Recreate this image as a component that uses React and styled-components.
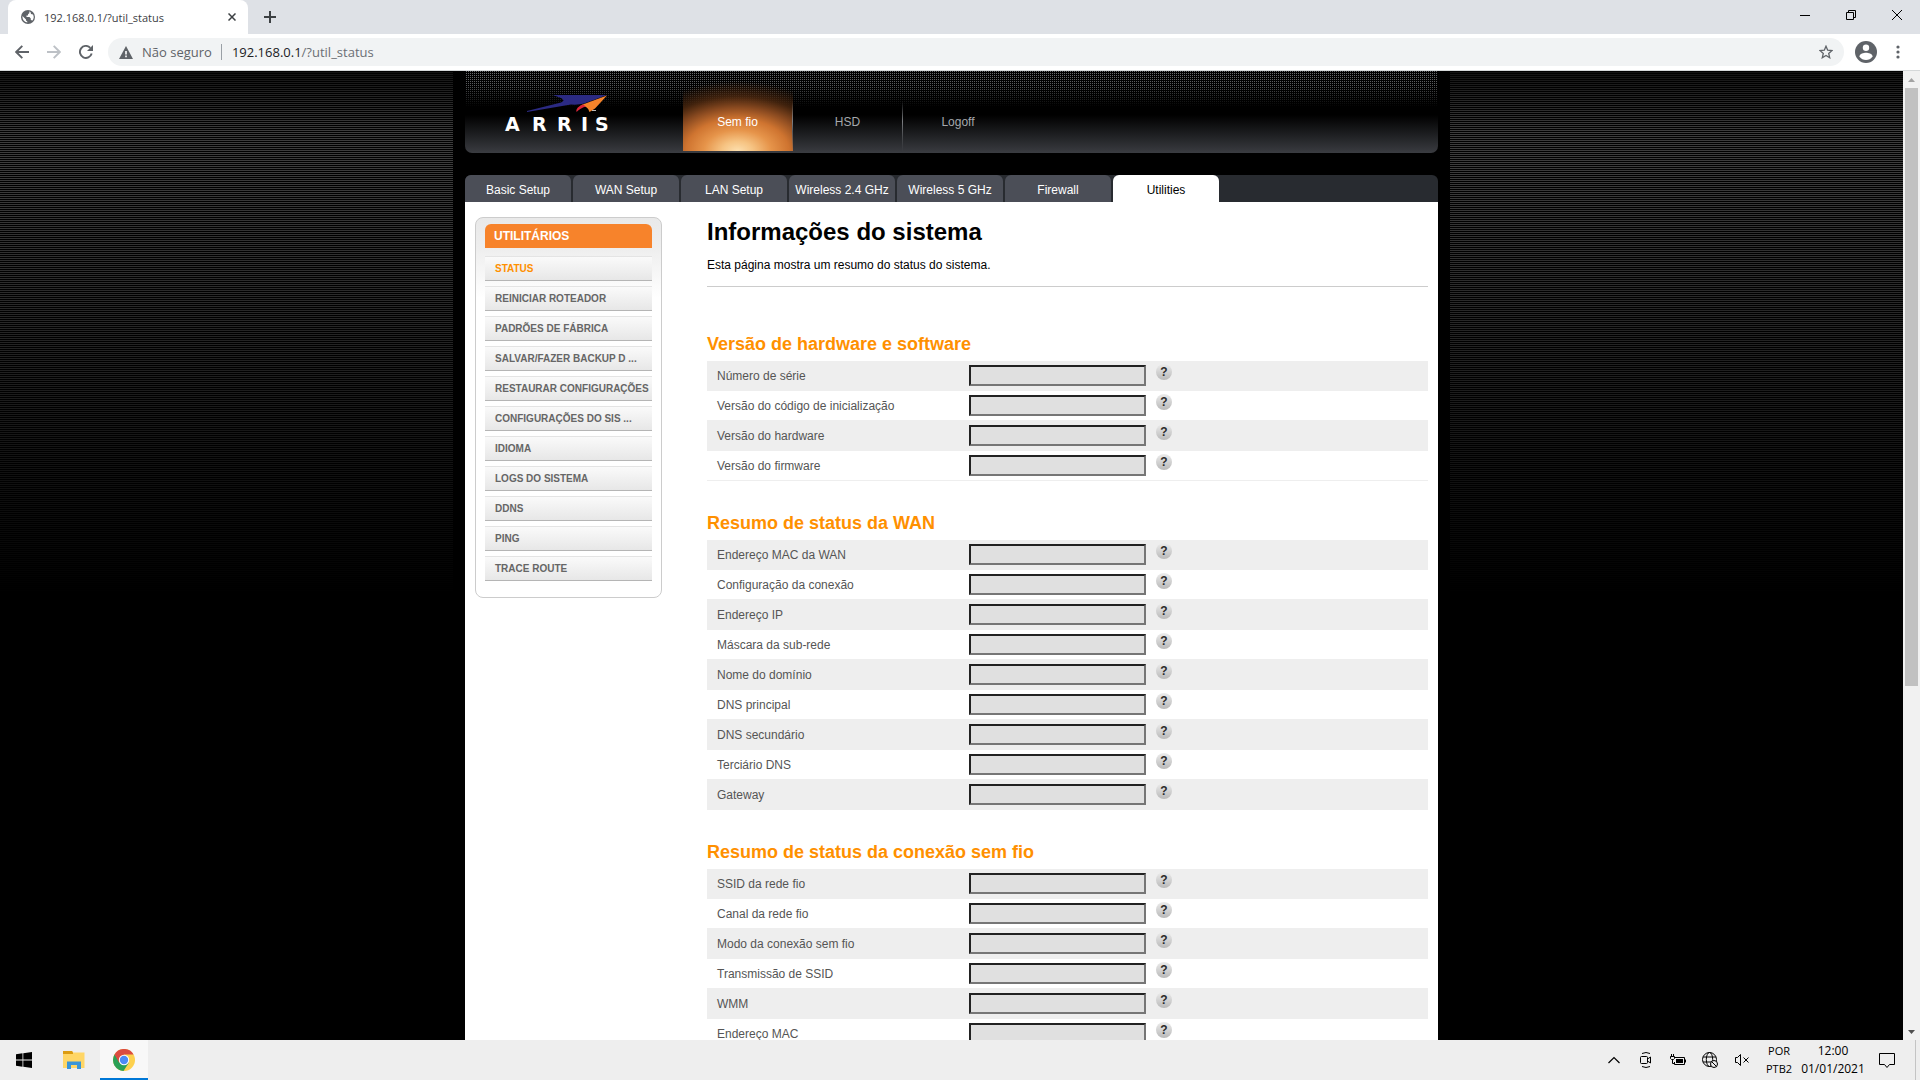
import React, { useState } from 'react'
import styled, { createGlobalStyle } from 'styled-components'

const GlobalStyle = createGlobalStyle`
  * {
    box-sizing: border-box;
  }
  body {
    margin: 0;
    font-family: "Liberation Sans", Arial, sans-serif;
    font-size: 12px;
  }
  button {
    border: 0;
    padding: 0;
    background: none;
    color: inherit;
    font-family: inherit;
    cursor: pointer;
  }
  a {
    text-decoration: none;
  }
  svg {
    display: block;
  }
`

const Screen = styled.div`
  display: flex;
  flex-direction: column;
  height: 100vh;
  overflow: hidden;
`

/* browser window */

const TabStrip = styled.div`
  display: flex;
  flex: none;
  height: 34px;
  padding-left: 8px;
  background: #dee1e6;
  font-family: "Open Sans", "Noto Sans", sans-serif;
  color: #3c4043;
`

const BrowserTab = styled.div`
  display: flex;
  align-items: center;
  width: 240px;
  height: 34px;
  padding: 0 8px 0 13px;
  border-radius: 8px 8px 0 0;
  background: #fff;
  font-size: 11px;
`

const TabTitle = styled.span`
  flex: 1;
  margin-left: 9px;
`

const IconButton = styled.button`
  display: flex;
  flex: none;
  align-items: center;
  justify-content: center;
  width: ${(props) => props.$w || 16}px;
  height: ${(props) => props.$h || 16}px;
  color: ${(props) => props.$color || '#5f6368'};
`

const WindowButtons = styled.div`
  display: flex;
  margin-left: auto;
`

const NewTab = styled(IconButton)`
  margin-left: 8px;
`

const Toolbar = styled.div`
  display: flex;
  flex: none;
  align-items: center;
  height: 37px;
  padding: 0 6px;
  border-bottom: 1px solid #d5d8d9;
  background: #fff;
  font-family: "Open Sans", "Noto Sans", sans-serif;
`

const Omnibox = styled.div`
  display: flex;
  flex: 1;
  align-items: center;
  height: 28px;
  margin: 0 6px;
  padding: 0 10px 0 11px;
  border-radius: 14px;
  background: #f1f3f4;
  font-size: 13px;
  color: #5f6368;
`

const Security = styled.span`
  margin-left: 9px;
  padding-right: 9px;
  border-right: 1px solid #9aa0a6;
  line-height: 16px;
`

const Address = styled.span`
  flex: 1;
  margin-left: 10px;
  color: #6b6f74;
`

const Host = styled.span`
  color: #202124;
`

const Viewport = styled.div`
  display: flex;
  flex: 1;
  min-height: 0;
  background: #000;
`

const Scrollbar = styled.div`
  display: flex;
  flex: none;
  flex-direction: column;
  align-items: center;
  width: 17px;
  background: #f1f1f1;
`

const Track = styled.div`
  flex: 1;
  width: 13px;
`

const Thumb = styled.div`
  height: 64%;
  background: #c1c1c1;
`

/* router page */

const Page = styled.div`
  position: relative;
  flex: 1;
  min-width: 0;
  overflow: hidden;
  background: #000;

  &::before {
    content: "";
    position: absolute;
    inset: 0 0 auto 0;
    height: 524px;
    background: repeating-linear-gradient(to bottom, #000 0 1px, #3c3c3c 1px 2px);
    mask-image: linear-gradient(to bottom, rgba(0, 0, 0, 0.3), #000 60px, #000 100px, transparent);
  }
`

const MainWrapper = styled.div`
  position: relative;
  max-width: 997px;
  min-height: 100%;
  margin: 0 auto;
  padding: 0 12px;
  background: #000;
`

const Header = styled.header`
  position: relative;
  display: flex;
  height: 82px;
  border-radius: 0 0 7px 7px;
  background: linear-gradient(to bottom, #000 44px, #3a3c41 82px);
  overflow: hidden;

  &::before {
    content: "";
    position: absolute;
    inset: 0 0 auto 0;
    height: 36px;
    background: conic-gradient(#6a6c70 25%, #000 0) 0 0 / 2px 2px;
    mask-image: linear-gradient(to bottom, #000, rgba(0, 0, 0, 0.8) 14px, transparent);
  }
`

const Logo = styled.a`
  position: relative;
  width: 218px;
  padding: 14px 0 0 35px;
`

const MainNav = styled.nav`
  position: relative;
  display: flex;
  height: 80px;
`

const MainNavItem = styled.a`
  width: 110px;
  padding-top: 43px;
  border-right: 1px solid;
  border-image: linear-gradient(to bottom, transparent 30px, #7b7d81 50px, #55575b 60px, transparent) 1;
  text-align: center;
  line-height: 16px;
  color: #a5a8ac;

  &:last-child {
    border: 0;
  }

  ${(props) => props.$active && `
    color: #fff;
    background: radial-gradient(ellipse 112px 70px at 50% 100%, #fddfae 0, #f6c382 14%, #e6944a 30%, #cf7430 46%, #8a4a20 62%, rgba(80, 42, 16, 0.8) 78%, rgba(50, 26, 10, 0) 100%);
  `}
`

const SubNav = styled.nav`
  display: flex;
  gap: 2px;
  height: 27px;
  margin-top: 22px;
  border-radius: 6px 6px 0 0;
  background: #282b30;
`

const SubNavItem = styled.a`
  width: 106px;
  border-radius: 6px 6px 0 0;
  background: ${(props) => (props.$active ? '#fff' : '#4b4e57')};
  color: ${(props) => (props.$active ? '#000' : '#fff')};
  line-height: 30px;
  height: 27px;
  text-align: center;
  white-space: nowrap;
`

const Content = styled.div`
  display: flex;
  align-items: flex-start;
  gap: 45px;
  padding: 0 10px 30px;
  background: #fff;
`

const Sidebar = styled.aside`
  flex: none;
  width: 187px;
  margin-top: 15px;
  padding: 6px 9px 16px;
  border: 1px solid #ccc;
  border-radius: 8px;
  background: linear-gradient(to bottom, #e9e9e9, #eee 30px, #fff 80px);
`

const SidebarTitle = styled.h3`
  margin: 0 0 8px;
  padding-left: 9px;
  border-radius: 6px 6px 0 0;
  background: #f7832b;
  color: #fff;
  font-size: 12px;
  line-height: 24px;
`

const Menu = styled.ul`
  display: flex;
  flex-direction: column;
  gap: 5px;
  margin: 0;
  padding: 0;
  list-style: none;
`

const MenuLink = styled.a`
  display: block;
  height: 25px;
  padding-left: 10px;
  border-top: 1px solid #e4e4e4;
  border-bottom: 1px solid #b5b5b5;
  background: linear-gradient(to bottom, #fafafa, #e7e7e7);
  color: ${(props) => (props.$active ? '#ff9000' : '#666')};
  font-size: 10px;
  font-weight: bold;
  line-height: 23px;
  white-space: nowrap;
`

const Main = styled.main`
  flex: 1;
  min-width: 0;
  padding-top: 14px;
`

const Heading = styled.h1`
  margin: 0 0 9px;
  font-size: 24px;
  line-height: 32px;
`

const Intro = styled.p`
  margin: 0;
  padding-bottom: 13px;
  border-bottom: 1px solid #ccc;
  line-height: 16px;
`

const Sections = styled.div`
  display: flex;
  flex-direction: column;
  gap: 30px;
  margin-top: 45px;
`

const Title = styled.h2`
  margin: 0 0 5px;
  color: #ff9000;
  font-size: 18px;
  line-height: 24px;
`

const Row = styled.div`
  display: flex;
  align-items: flex-start;
  height: 30px;
  border-bottom: 1px solid #eee;

  &:nth-child(even) {
    background: #eee;
  }
`

const Label = styled.label`
  width: 262px;
  padding-left: 10px;
  color: #555;
  line-height: 30px;
`

const Field = styled.input`
  width: 177px;
  height: 21px;
  margin: 4px 10px 0 0;
  padding: 0 2px;
  border: 2px solid;
  border-color: #222 #767676 #767676 #222;
  background: #e0e0e0;
`

const Help = styled.button`
  width: 16px;
  height: 16px;
  margin-top: 3px;
  border-radius: 50%;
  background: linear-gradient(to bottom, #ececec, #b9b9b9);
  color: #2b2b2b;
  font-size: 12px;
  font-weight: bold;
  line-height: 16px;
`

/* taskbar */

const Taskbar = styled.footer`
  display: flex;
  flex: none;
  align-items: center;
  height: 40px;
  background: #eee;
  color: #000;
  font-family: "Open Sans", "Noto Sans", sans-serif;
`

const Apps = styled.div`
  display: flex;
  gap: 2px;
`

const AppButton = styled(IconButton)`
  width: 48px;
  height: 40px;
  ${(props) => props.$active && `
    background: #f8f8f8;
    border-bottom: 2px solid #0078d7;
    border-top: 2px solid transparent;
  `}
`

const Tray = styled.div`
  display: flex;
  align-items: center;
  gap: 16px;
  margin-left: auto;
`

const Language = styled.button`
  width: 26px;
  margin-right: 8px;
  font-size: 11px;
  line-height: 18px;
`

const Clock = styled.button`
  width: 66px;
  margin-right: 3px;
  font-size: 12px;
  line-height: 18px;
`

const Notifications = styled(IconButton)`
  width: 36px;
`

const ShowDesktop = styled.button`
  width: 5px;
  height: 40px;
  margin-left: 10px;
  border-left: 1px solid #c4c4c4;
`

const TrayText = styled.div`
  display: flex;
`

const mainNav = ['Sem fio', 'HSD', 'Logoff']

const subNav = ['Basic Setup', 'WAN Setup', 'LAN Setup', 'Wireless 2.4 GHz', 'Wireless 5 GHz', 'Firewall', 'Utilities']

const menu = [
  'STATUS',
  'REINICIAR ROTEADOR',
  'PADRÕES DE FÁBRICA',
  'SALVAR/FAZER BACKUP D ...',
  'RESTAURAR CONFIGURAÇÕES',
  'CONFIGURAÇÕES DO SIS ...',
  'IDIOMA',
  'LOGS DO SISTEMA',
  'DDNS',
  'PING',
  'TRACE ROUTE',
]

const sections = [
  {
    title: 'Versão de hardware e software',
    fields: ['Número de série', 'Versão do código de inicialização', 'Versão do hardware', 'Versão do firmware'],
  },
  {
    title: 'Resumo de status da WAN',
    fields: [
      'Endereço MAC da WAN',
      'Configuração da conexão',
      'Endereço IP',
      'Máscara da sub-rede',
      'Nome do domínio',
      'DNS principal',
      'DNS secundário',
      'Terciário DNS',
      'Gateway',
    ],
  },
  {
    title: 'Resumo de status da conexão sem fio',
    fields: ['SSID da rede fio', 'Canal da rede fio', 'Modo da conexão sem fio', 'Transmissão de SSID', 'WMM', 'Endereço MAC'],
  },
]

const ArrisLogo = () => (
  <svg width="116" height="56" viewBox="0 0 116 56">
    <path d="M53 10H107L84 18.500Q79 20 71 19.500L27 27V26L61 17.500Q66 15.500 61 13Z" fill="#2b2a83" />
    <path d="M107 10.500L80 20.500Q88 20.500 89.500 27L95 23.500Z" fill="#f5832a" />
    <path d="M83 19.500Q75.500 22 76.500 27Q81 22.500 86 21.500Z" fill="#dc2438" />
    <path d="M92 25.500H96" stroke="#bbb" strokeWidth="1" />
    <text x="5 32 57 81 95" y="46" fill="#fff" fontFamily="DejaVu Sans, sans-serif" fontWeight="bold" fontSize="19">ARRIS</text>
  </svg>
)

const GlobeIcon = () => (
  <svg width="14" height="14" viewBox="0 0 14 14">
    <circle cx="7" cy="7" r="7" fill="#5f6368" />
    <path d="M8 1.400L8.500 3L7 4.200V5.500H5.500V7H8.500L9.800 8.500V10L11.500 10.500A5.600 5.600 0 0 0 12 4.500L10 4L9.500 2ZM1.500 6L5 9.500V10.500L6.300 11.500V12.600A5.600 5.600 0 0 1 1.500 6Z" fill="#fff" />
  </svg>
)

const BrowserBar = () => (
  <>
    <TabStrip>
      <BrowserTab>
        <GlobeIcon />
        <TabTitle>192.168.0.1/?util_status</TabTitle>
        <IconButton aria-label="Fechar guia" $color="#3c4043">
          <svg width="8" height="8" viewBox="0 0 8 8"><path d="M0.500 0.500L7.500 7.500M7.500 0.500L0.500 7.500" stroke="currentColor" strokeWidth="1.500" /></svg>
        </IconButton>
      </BrowserTab>
      <NewTab aria-label="Nova guia" $w={28} $h={34} $color="#3c4043">
        <svg width="12" height="12" viewBox="0 0 12 12"><path d="M6 0V12M0 6H12" stroke="currentColor" strokeWidth="2" /></svg>
      </NewTab>
      <WindowButtons>
        <IconButton aria-label="Minimizar" $w={46} $h={29} $color="#000">
          <svg width="10" height="10"><path d="M0 5.500H10" stroke="currentColor" /></svg>
        </IconButton>
        <IconButton aria-label="Restaurar" $w={46} $h={29} $color="#000">
          <svg width="10" height="10"><path d="M0.500 2.500H7.500V9.500H0.500ZM2.500 2.500V0.500H9.500V7.500H7.500" stroke="currentColor" fill="none" /></svg>
        </IconButton>
        <IconButton aria-label="Fechar" $w={46} $h={29} $color="#000">
          <svg width="10" height="10"><path d="M0 0L10 10M10 0L0 10" stroke="currentColor" /></svg>
        </IconButton>
      </WindowButtons>
    </TabStrip>
    <Toolbar>
      <IconButton aria-label="Voltar" $w={32} $h={28}>
        <svg width="14" height="14" viewBox="0 0 14 14"><path d="M14 7H1.500M7.300 0.800L1.200 7L7.300 13.200" stroke="currentColor" strokeWidth="1.900" fill="none" /></svg>
      </IconButton>
      <IconButton aria-label="Avançar" $w={32} $h={28} $color="#bdc1c6">
        <svg width="14" height="14" viewBox="0 0 14 14"><path d="M0 7H12.500M6.700 0.800L12.800 7L6.700 13.200" stroke="currentColor" strokeWidth="1.900" fill="none" /></svg>
      </IconButton>
      <IconButton aria-label="Atualizar" $w={32} $h={28}>
        <svg width="14" height="14" viewBox="0 0 14 14">
          <path d="M12.700 8.500A6 6 0 1 1 11.300 2.800" stroke="currentColor" strokeWidth="1.900" fill="none" />
          <path d="M14 0V6H8Z" fill="currentColor" />
        </svg>
      </IconButton>
      <Omnibox>
        <svg width="14" height="13" viewBox="0 0 14 13">
          <path d="M7 0L14 13H0Z" fill="#5f6368" />
          <path d="M7 5V8.500M7 9.500V11.200" stroke="#fff" strokeWidth="1.600" />
        </svg>
        <Security>Não seguro</Security>
        <Address><Host>192.168.0.1</Host>/?util_status</Address>
        <IconButton aria-label="Favoritos">
          <svg width="14" height="14" viewBox="0 0 14 14"><path d="M7 1.200L8.700 5.200L13 5.600L9.700 8.400L10.700 12.700L7 10.400L3.300 12.700L4.300 8.400L1 5.600L5.300 5.200Z" stroke="currentColor" strokeWidth="1.300" fill="none" /></svg>
        </IconButton>
      </Omnibox>
      <IconButton aria-label="Perfil" $w={32} $h={28}>
        <svg width="22" height="22" viewBox="0 0 22 22">
          <circle cx="11" cy="11" r="11" fill="currentColor" />
          <circle cx="11" cy="6.700" r="3.200" fill="#fff" />
          <path d="M4.300 15.500C5 12.500 8.500 11.800 11 11.800S17 12.500 17.700 15.500C16 18 13.500 19 11 19S6 18 4.300 15.500Z" fill="#fff" />
        </svg>
      </IconButton>
      <IconButton aria-label="Menu" $w={32} $h={28}>
        <svg width="4" height="14" viewBox="0 0 4 14" fill="currentColor"><circle cx="2" cy="2" r="1.600" /><circle cx="2" cy="7" r="1.600" /><circle cx="2" cy="12" r="1.600" /></svg>
      </IconButton>
    </Toolbar>
  </>
)

const WindowsTaskbar = () => (
  <Taskbar>
    <Apps>
      <AppButton aria-label="Iniciar" $color="#000">
        <svg width="16" height="16" viewBox="0 0 16 16" fill="currentColor"><path d="M0 2.300L6.500 1.300V7.500H0ZM7.300 1.200L16 0V7.500H7.300ZM0 8.400H6.500V14.700L0 13.700ZM7.300 8.400H16V16L7.300 14.800Z" /></svg>
      </AppButton>
      <AppButton aria-label="Explorador de Arquivos">
        <svg width="22" height="18" viewBox="0 0 22 18">
          <path d="M0 0H9L10 1.500H21.500V17H0Z" fill="#ffd666" />
          <path d="M0 0H9L10 1.500V3H0Z" fill="#dc9c12" />
          <path d="M4 18V10.500H18V18H14V14H8V18Z" fill="#3a95d8" />
        </svg>
      </AppButton>
      <AppButton aria-label="Chrome" $active>
        <svg width="22" height="22" viewBox="0 0 22 22">
          <circle cx="11" cy="11" r="11" fill="#fdd14f" />
          <path d="M11 11L1.500 5.500A11 11 0 0 0 10.500 22L15.800 13.800Z" fill="#2aa056" />
          <path d="M11 11L6.200 13.700L1.500 5.500A11 11 0 0 1 20.600 5.500H11Z" fill="#db4c40" />
          <circle cx="11" cy="11" r="5.200" fill="#fff" />
          <circle cx="11" cy="11" r="4.200" fill="#4c8bf5" />
        </svg>
      </AppButton>
    </Apps>
    <Tray>
      <IconButton aria-label="Mostrar ícones ocultos" $color="#000">
        <svg width="12" height="8" viewBox="0 0 12 8"><path d="M0.500 7L6 1.500L11.500 7" stroke="currentColor" strokeWidth="1.200" fill="none" /></svg>
      </IconButton>
      <IconButton aria-label="Reunir agora" $color="#000">
        <svg width="16" height="16" viewBox="0 0 16 16" stroke="currentColor" fill="none"><rect x="2.500" y="4.500" width="7" height="7" rx="1" /><path d="M9.500 7L12.500 5V11L9.500 9M4 1.500Q8 -0.500 12 1.500M4 14.500Q8 16.500 12 14.500" /></svg>
      </IconButton>
      <IconButton aria-label="Bateria" $color="#000">
        <svg width="16" height="14" viewBox="0 0 16 14"><path d="M4.500 4.500H14.500V11.500H4.500V9M15.500 6.500V9.500" stroke="currentColor" fill="none" /><path d="M6 6H13V10H6Z" fill="currentColor" /><path d="M1.500 1V3M3.500 1V3M0.500 3.500H4.500V5.500L3.500 6.500H1.500L0.500 5.500ZM2.500 7V10.500H5" stroke="currentColor" fill="none" /></svg>
      </IconButton>
      <IconButton aria-label="Rede" $color="#000">
        <svg width="16" height="16" viewBox="0 0 16 16" stroke="currentColor" fill="none">
          <circle cx="7.500" cy="7.500" r="7" /><ellipse cx="7.500" cy="7.500" rx="3.200" ry="7" /><path d="M1 5H14M1 10H14" />
          <circle cx="12" cy="12" r="3.500" fill="#eee" /><path d="M9.600 9.600L14.400 14.400" />
        </svg>
      </IconButton>
      <IconButton aria-label="Volume" $color="#000">
        <svg width="16" height="14" viewBox="0 0 16 14" stroke="currentColor" fill="none"><path d="M1.500 4.500H3.500L6.500 1.500V12.500L3.500 9.500H1.500ZM9.500 4.500L14.500 9.500M14.500 4.500L9.500 9.500" /></svg>
      </IconButton>
      <TrayText>
        <Language>POR<br />PTB2</Language>
        <Clock>12:00<br />01/01/2021</Clock>
        <Notifications aria-label="Notificações" $color="#000" $h={40}>
          <svg width="16" height="17" viewBox="0 0 16 17"><path d="M0.500 1.500H15.500V12.500H10.500L8 15.500L5.500 12.500H0.500Z" stroke="currentColor" fill="none" /></svg>
        </Notifications>
        <ShowDesktop aria-label="Mostrar área de trabalho" />
      </TrayText>
    </Tray>
  </Taskbar>
)

const App = () => {
  const [activeMain, setActiveMain] = useState('Sem fio')
  const [activeSub, setActiveSub] = useState('Utilities')
  const [activeMenu, setActiveMenu] = useState('STATUS')

  return (
    <>
      <GlobalStyle />
      <Screen>
        <BrowserBar />
        <Viewport>
          <Page>
            <MainWrapper>
              <Header>
                <Logo href="#" aria-label="ARRIS">
                  <ArrisLogo />
                </Logo>
                <MainNav>
                  {mainNav.map((item) => (
                    <MainNavItem key={item} href="#" $active={item === activeMain} onClick={() => setActiveMain(item)}>
                      {item}
                    </MainNavItem>
                  ))}
                </MainNav>
              </Header>
              <SubNav>
                {subNav.map((item) => (
                  <SubNavItem key={item} href="#" $active={item === activeSub} onClick={() => setActiveSub(item)}>
                    {item}
                  </SubNavItem>
                ))}
              </SubNav>
              <Content>
                <Sidebar>
                  <SidebarTitle>UTILITÁRIOS</SidebarTitle>
                  <Menu>
                    {menu.map((item) => (
                      <li key={item}>
                        <MenuLink href="#" $active={item === activeMenu} onClick={() => setActiveMenu(item)}>
                          {item}
                        </MenuLink>
                      </li>
                    ))}
                  </Menu>
                </Sidebar>
                <Main>
                  <Heading>Informações do sistema</Heading>
                  <Intro>Esta página mostra um resumo do status do sistema.</Intro>
                  <Sections>
                    {sections.map((section, s) => (
                      <section key={section.title}>
                        <Title>{section.title}</Title>
                        {section.fields.map((field, f) => (
                          <Row key={field}>
                            <Label htmlFor={`field-${s}-${f}`}>{field}</Label>
                            <Field id={`field-${s}-${f}`} type="text" readOnly />
                            <Help type="button" aria-label={`Ajuda: ${field}`}>?</Help>
                          </Row>
                        ))}
                      </section>
                    ))}
                  </Sections>
                </Main>
              </Content>
            </MainWrapper>
          </Page>
          <Scrollbar>
            <IconButton aria-label="Rolar para cima" $w={17} $h={17} $color="#a3a3a3">
              <svg width="7" height="4"><path d="M3.500 0L7 4H0Z" fill="currentColor" /></svg>
            </IconButton>
            <Track><Thumb /></Track>
            <IconButton aria-label="Rolar para baixo" $w={17} $h={17} $color="#505050">
              <svg width="7" height="4"><path d="M0 0H7L3.500 4Z" fill="currentColor" /></svg>
            </IconButton>
          </Scrollbar>
        </Viewport>
        <WindowsTaskbar />
      </Screen>
    </>
  )
}

export default App
